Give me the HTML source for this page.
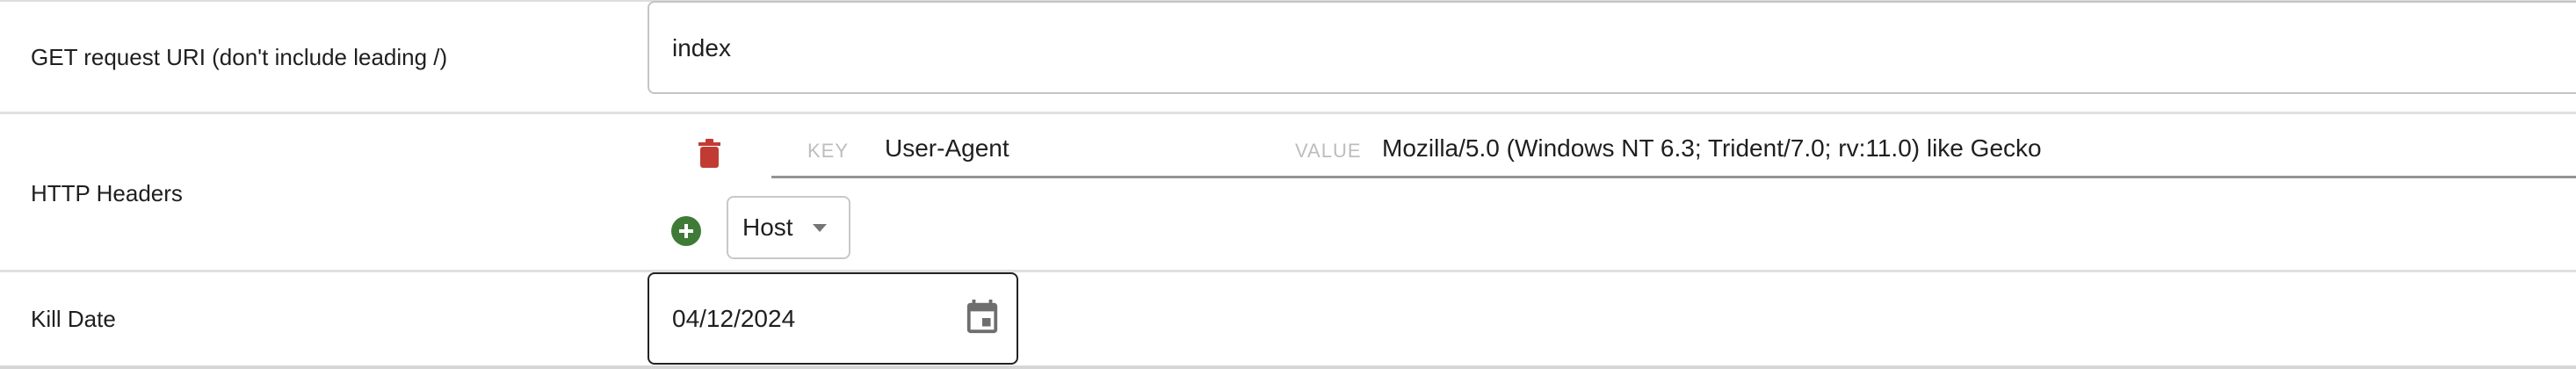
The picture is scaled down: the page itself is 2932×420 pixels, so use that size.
<!DOCTYPE html>
<html><head><meta charset="utf-8"><style>
*{margin:0;padding:0;box-sizing:border-box}
body{width:2932px;height:420px;background:#fff;position:relative;overflow:hidden;font-family:"Liberation Sans",sans-serif;color:#1f1f1f}
.a{position:absolute}
.hl{position:absolute;left:0;width:2932px;height:3px;background:#e0e0e0}
.lbl{position:absolute;left:35px;font-size:26px;line-height:30px}
.t28{font-size:28px;line-height:34px;position:absolute}
</style></head><body>
<div class="hl" style="top:0;height:2px;background:#ddd"></div>
<div class="lbl" style="top:50px">GET request URI (don't include leading /)</div>
<div class="a" style="left:737px;top:1px;width:2220px;height:106px;border:2px solid #c4c4c4;border-radius:8px"></div>
<div class="t28" style="left:765px;top:38px">index</div>
<div class="hl" style="top:127px"></div>
<div class="lbl" style="top:205px">HTTP Headers</div>
<svg class="a" style="left:795px;top:157px" width="25" height="34" viewBox="0 0 25 34"><rect x="0" y="5" width="25" height="4" fill="#c23b33"/><rect x="8" y="1" width="9" height="5" rx="1" fill="#c23b33"/><rect x="2" y="10" width="21" height="24" rx="3" fill="#c23b33"/></svg>
<div class="a" style="left:878px;top:200px;width:2060px;height:3px;background:#949494"></div>
<div class="a" style="left:919px;top:158px;font-size:22px;line-height:28px;color:#bdbdbd;letter-spacing:1px">KEY</div>
<div class="t28" style="left:1007px;top:152px">User-Agent</div>
<div class="a" style="left:1474px;top:158px;font-size:22px;line-height:28px;color:#bdbdbd;letter-spacing:1px">VALUE</div>
<div class="t28" style="left:1573px;top:152px">Mozilla/5.0 (Windows NT 6.3; Trident/7.0; rv:11.0) like Gecko</div>
<svg class="a" style="left:764px;top:246px" width="34" height="34" viewBox="0 0 34 34"><circle cx="17" cy="17" r="17" fill="#3f7b37"/><path d="M17 9v16M9 17h16" stroke="#fff" stroke-width="4"/></svg>
<div class="a" style="left:827px;top:223px;width:141px;height:72px;border:2px solid #c8c8c8;border-radius:8px"></div>
<div class="t28" style="left:845px;top:242px">Host</div>
<svg class="a" style="left:925px;top:255px" width="16" height="9"><path d="M0 0h16L8 9z" fill="#757575"/></svg>
<div class="hl" style="top:307px"></div>
<div class="lbl" style="top:348px">Kill Date</div>
<div class="a" style="left:737px;top:310px;width:422px;height:105px;border:2px solid #222;border-radius:8px"></div>
<div class="t28" style="left:765px;top:346px">04/12/2024</div>
<svg class="a" style="left:1100px;top:341px" width="36" height="40" viewBox="3 1 18 21"><path fill="#6e6e6e" d="M17 12h-5v5h5v-5zM16 1v2H8V1H6v2H5c-1.11 0-1.99.9-1.99 2L3 19c0 1.1.89 2 2 2h14c1.1 0 2-.9 2-2V5c0-1.1-.9-2-2-2h-1V1h-2zm3 18H5V8h14v11z"/></svg>
<div class="hl" style="top:416px;height:4px;background:#d6d6d6"></div>
</body></html>
